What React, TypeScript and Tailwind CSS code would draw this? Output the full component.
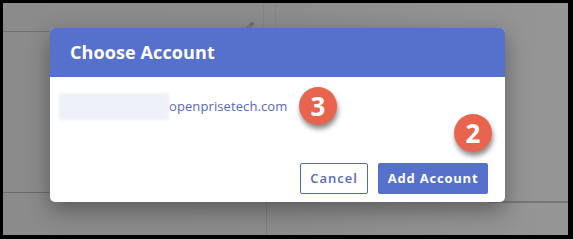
import { Pencil } from 'lucide-react'

function Badge({ n, className }: { n: string; className: string }) {
  return (
    <div
      className={`absolute flex h-[38px] w-[38px] items-center justify-center rounded-full bg-[#e8644f] text-[26px] font-bold leading-none text-white shadow-[1px_4px_5px_rgba(0,0,0,0.45)] ${className}`}
    >
      {n}
    </div>
  )
}

export default function App() {
  return (
    <div
      className="h-[239px] w-[573px] bg-black pb-[4px] pl-[3px] pr-[5px] pt-[3px]"
      style={{ fontFamily: '"Open Sans", "Liberation Sans", sans-serif' }}
    >
      <div className="relative h-full w-full overflow-hidden bg-gradient-to-r from-[#8c8b8c] via-[#8d8c8d] to-[#979697]">
        {/* faint page lines behind the overlay */}
        <div className="absolute left-0 top-[28px] h-px w-[60px] bg-[#6f6e70]" />
        <div className="absolute left-0 top-[189px] h-px w-[60px] bg-[#6a696b]" />
        <div className="absolute right-0 top-[198px] h-[2px] w-[80px] bg-[#767577]" />
        <div className="absolute left-[260px] top-0 h-[30px] w-px bg-[#858485]" />
        <div className="absolute left-[272px] top-0 h-[30px] w-px bg-[#858485]" />
        <div className="absolute left-[263px] top-[195px] h-[40px] w-px bg-[#7d7c7e]" />
        <Pencil className="absolute left-[243px] top-[19px] size-[8px] text-[#3f3f3f]" strokeWidth={2} />

        {/* dialog */}
        <div className="pl-[47px] pt-[25px]">
          <div className="relative h-[174px] w-[455px] rounded-[5px] bg-white shadow-[0_8px_22px_rgba(30,30,30,0.45)]">
            <div className="flex h-[49px] items-center rounded-t-[5px] bg-[#5571cc] pl-[20px]">
              <h1 className="text-[18px] font-bold tracking-[0.1px] text-white">Choose Account</h1>
            </div>
            <div className="flex h-[125px] flex-col justify-between pb-[8px] pl-[9px] pr-[17px] pt-[16px]">
              <div className="flex items-center">
                <span className="h-[27px] w-[110px] rounded-[2px] bg-[#eef0f7] blur-[1.5px]" />
                <span className="text-[13px] tracking-[0.1px] text-[#5768bb]">openprisetech.com</span>
              </div>
              <div className="flex justify-end gap-[10px]">
                <button
                  type="button"
                  className="h-[31px] w-[68px] rounded-[2px] border border-[#5568bb] bg-white text-[13px] font-semibold tracking-[1px] text-[#5768b4]"
                >
                  Cancel
                </button>
                <button
                  type="button"
                  className="h-[31px] w-[110px] rounded-[2px] bg-[#5571cc] text-[13px] font-bold tracking-[0.8px] text-white"
                >
                  Add Account
                </button>
              </div>
            </div>
            <Badge n="3" className="left-[249px] top-[59px]" />
            <Badge n="2" className="left-[404px] top-[86px]" />
          </div>
        </div>
      </div>
    </div>
  )
}
